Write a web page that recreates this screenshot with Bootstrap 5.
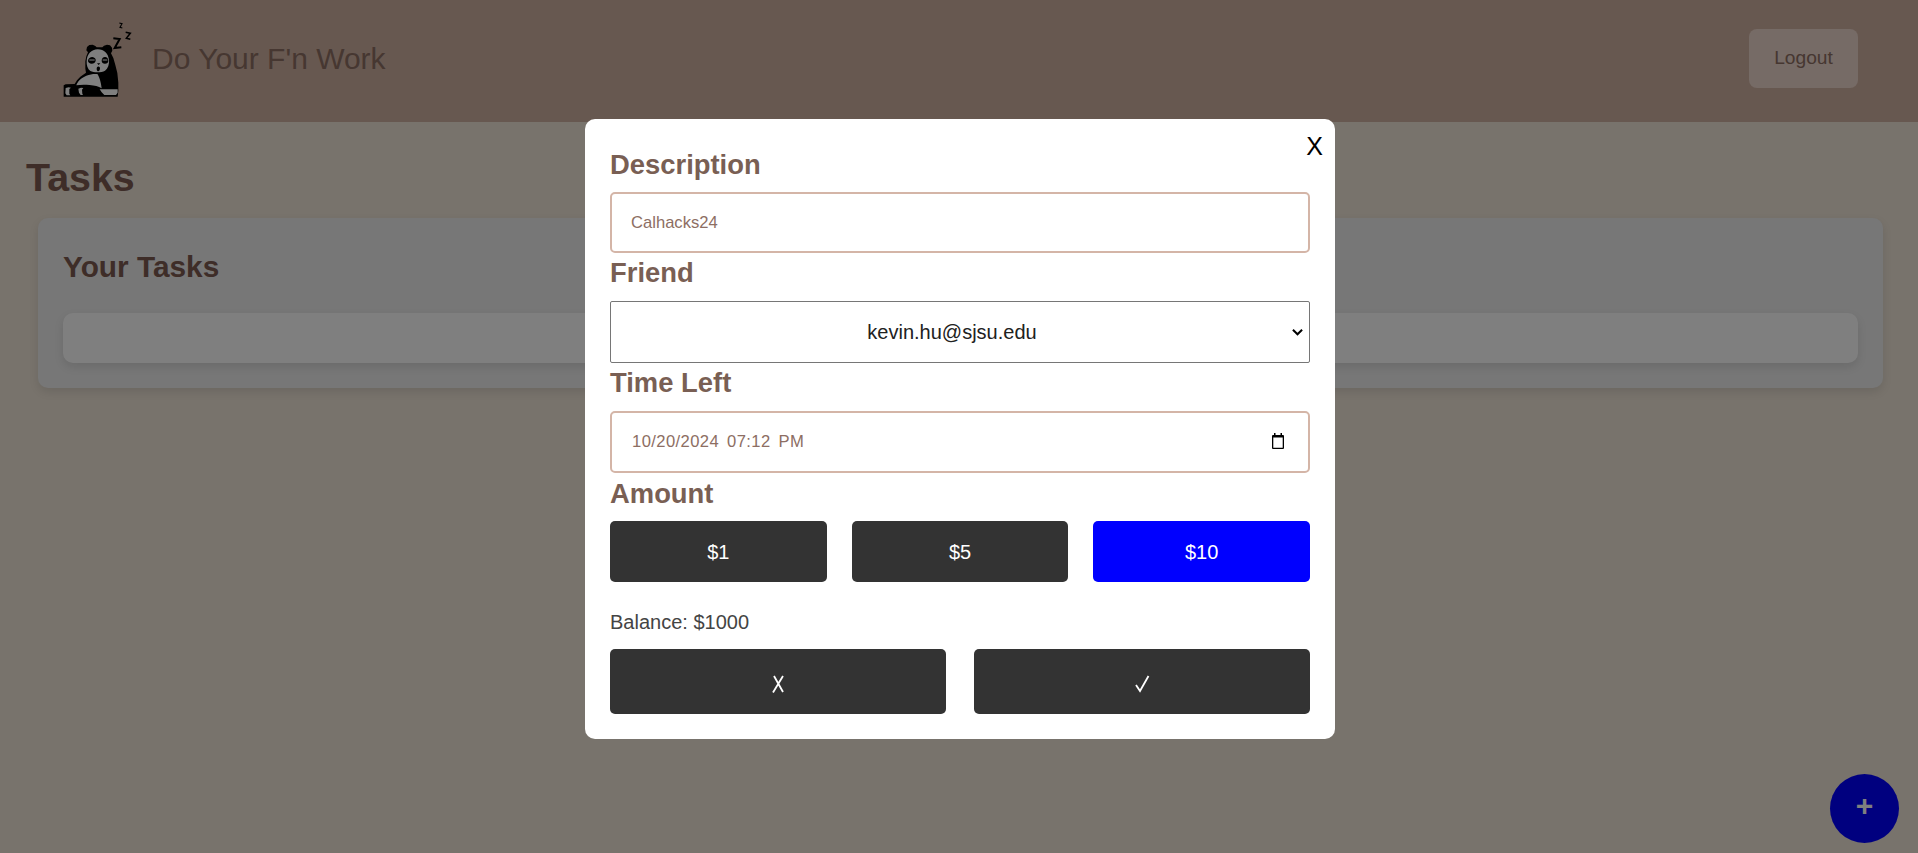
<!DOCTYPE html>
<html lang="en">
<head>
  <meta charset="UTF-8" />
  <title>Do Your F'n Work</title>
  <link href="https://cdn.jsdelivr.net/npm/bootstrap@5.3.3/dist/css/bootstrap.min.css" rel="stylesheet">
  <style>
    body {
      background: #f0e6d8;
      font-family: "Liberation Sans", Arial, sans-serif;
      overflow: hidden;
      height: 853px;
    }
    .top-bar {
      height: 122px;
      background: #cfb1a1;
      padding: 0 60px 5px 62px;
    }
    .logo-img { width: 74px; height: 80px; margin-right: 16px; margin-top: 3px; }
    .app-title { font-size: 30px; color: #8d6e63; margin: 0; }
    .logout-btn {
      width: 109px;
      height: 59px;
      background: #ecd6cc;
      color: #8d6e63;
      font-size: 19.2px;
      border: 0;
      border-radius: 8px;
      padding: 0;
    }
    .page-heading { font-size: 39.4px; font-weight: 700; color: #7d5a50; margin: 0; padding: 32px 0 18px 26px; line-height: 46px; }
    .tasks-box {
      margin: 0 35px 0 38px;
      height: 170px;
      background: #eeeeee;
      border-radius: 10px;
      padding: 32px 25px 0;
      box-shadow: 0 4px 10px rgba(0,0,0,.1);
    }
    .tasks-title { font-size: 29.8px; font-weight: 700; color: #7d5a50; margin: 0 0 29px; line-height: 34px; }
    .task-slot { height: 50px; background: #fff; border-radius: 10px; box-shadow: 0 4px 10px rgba(0,0,0,.1); }
    .fab {
      position: fixed;
      left: 1830px;
      top: 774px;
      width: 69px;
      height: 69px;
      border-radius: 50%;
      border: 0;
      background: #0000ff;
      color: #fff;
      font-size: 30px;
      font-weight: 700;
      line-height: 1;
      padding: 0 0 6px;
    }
    .dim-layer {
      position: fixed;
      inset: 0;
      background: rgba(0,0,0,.5);
      padding: 119px 0 0 2px;
    }
    .task-dialog {
      position: relative;
      width: 750px;
      height: 620px;
      background: #fff;
      border-radius: 10px;
      padding: 25px;
    }
    .close-x {
      position: absolute;
      top: 12px;
      right: 12px;
      font-size: 25px;
      line-height: 30px;
      color: #000;
      background: none;
      border: 0;
      padding: 0;
    }
    .field-label {
      display: block;
      font-size: 27.4px;
      font-weight: 700;
      line-height: 32px;
      color: #795f54;
      margin: 4px 0 12px;
    }
    .field-label.label-low { margin: 5px 0 11px; }
    .text-field.form-control {
      height: 61px;
      border: 2px solid #d4b5a7;
      border-radius: 5px;
      padding: 0 19px;
      font-size: 16.6px;
      color: #8d6e63;
      box-shadow: none;
    }
    .date-wrap { margin-top: 1px; }
    .date-field.form-control { height: 62px; padding-left: 20px; letter-spacing: .4px; word-spacing: 3px; }
    .date-icon { position: absolute; right: 26px; top: 22px; width: 12px; height: 16px; }
    .friend-pick.form-select {
      height: 62px;
      border: 1px solid #767676;
      border-radius: 2px;
      padding: 0 16px 0 0;
      font-size: 20px;
      text-align: center;
      color: #212121;
      background-image: url("data:image/svg+xml,%3csvg xmlns='http://www.w3.org/2000/svg' viewBox='0 0 12 8'%3e%3cpath fill='none' stroke='%23000' stroke-width='2.2' d='M1 1.500l5 5 5-5'/%3e%3c/svg%3e");
      background-position: right 6px center;
      background-size: 11px 8px;
    }
    .dark-btn {
      background: #333;
      color: #fff;
      border: 0;
      border-radius: 5px;
      font-size: 20px;
      padding: 0;
    }
    .dark-btn.picked { background: #0000ff; }
    .mark-icon { width: 15px; height: 18px; margin-top: 1px; }
    .amount-row { height: 61px; gap: 25px; }
    .confirm-row { height: 65px; gap: 28px; }
    .balance-line { font-size: 20px; line-height: 30px; color: #444; margin: 25px 0 12px; }
  </style>
</head>
<body>

<header class="top-bar d-flex align-items-center justify-content-between">
  <div class="d-flex align-items-center">
    <svg class="logo-img" viewBox="65 30 222 240" aria-label="Sleeping panda logo">
      <path fill="#000" d="M70 260V226l6-3 27-1 7-11 10-11 17-12-2-12 0-22 3-15 5-12-5-6 2-10 7-6 10-1 8 4 4 4h17l5-5 9-3 9 2 6 7 1 9-4 8 7 14 6 21 6 24 3 29v24L232 260z"/>
      <path fill="#fff" d="M172 118c20 0 32 13 34 32 1 14-3 26-12 32-10 6-32 7-44 1-8-6-12-18-11-30 1-20 14-35 33-35z"/>
      <path fill="#000" d="M143 152c1-7 7-11 13-11 7 1 11 5 10 11-1 6-6 9-12 9-6-1-11-4-11-9zM184 152c0-6 4-11 10-11 6 0 10 5 10 11 0 5-4 9-10 9-6 0-10-4-10-9z"/>
      <path fill="none" stroke="#fff" stroke-width="3" d="M147 150h16M187 150h14"/>
      <path fill="#000" d="M170 160h10l-5 5zM172 170c3-2 7 0 7 5s-3 9-5 9-5-3-5-7 1-6 3-7z"/>
      <path fill="#fff" d="M108 226c3-11 14-22 30-29 12-5 24-6 33-5 6 8 11 24 13 43-10-6-21-9-36-10-15-1-29-1-40 1zM178 238h54l0 10-5 7-35 0-8-8zM76 234l9-2 7 1-5 4 0 14 3 5h-11l-4-6zM114 236l8-3 7 1-4 5 1 12 2 4h-7l-5-7z"/>
      <path fill="none" stroke="#000" stroke-width="6" d="M219 85l19 2-15 27 20-2"/>
      <path fill="none" stroke="#000" stroke-width="4.500" d="M256 67l14 3-12 15 12 3"/>
      <path fill="none" stroke="#000" stroke-width="3.500" d="M237 39l8 2-6 11 7 2"/>
    </svg>
    <h1 class="app-title fw-normal">Do Your F'n Work</h1>
  </div>
  <button class="logout-btn">Logout</button>
</header>

<main>
  <h2 class="page-heading">Tasks</h2>
  <section class="tasks-box">
    <h3 class="tasks-title">Your Tasks</h3>
    <div class="task-slot"></div>
  </section>
</main>

<button class="fab">+</button>

<div class="dim-layer d-flex justify-content-center align-items-start">
  <form class="task-dialog">
    <button type="button" class="close-x">X</button>

    <label class="field-label label-low" for="desc">Description</label>
    <input id="desc" type="text" class="form-control text-field" value="Calhacks24">

    <label class="field-label" for="friend">Friend</label>
    <select id="friend" class="form-select friend-pick">
      <option>kevin.hu@sjsu.edu</option>
    </select>

    <label class="field-label" for="due">Time Left</label>
    <div class="date-wrap position-relative">
      <input id="due" type="text" class="form-control text-field date-field" value="10/20/2024 07:12 PM">
      <svg class="date-icon" viewBox="0 0 12 16"><path fill="#000" fill-rule="evenodd" d="M2 0h1.500v2h5V0H10v2h1a1 1 0 0 1 1 1v12a1 1 0 0 1-1 1H1a1 1 0 0 1-1-1V3a1 1 0 0 1 1-1h1zM1.300 4.500v10.200h9.400V4.500z"/></svg>
    </div>

    <label class="field-label label-low" for="amount">Amount</label>
    <div id="amount" class="d-flex amount-row">
      <button type="button" class="dark-btn flex-fill w-100">$1</button>
      <button type="button" class="dark-btn flex-fill w-100">$5</button>
      <button type="button" class="dark-btn picked flex-fill w-100">$10</button>
    </div>

    <p class="balance-line">Balance: $1000</p>

    <div class="d-flex confirm-row">
      <button type="button" class="dark-btn flex-fill w-100" aria-label="Cancel">
        <svg class="mark-icon" viewBox="0 0 15 18"><path fill="none" stroke="#fff" stroke-width="1.800" d="M3 1l9 16M12 1L2 17.500"/></svg>
      </button>
      <button type="button" class="dark-btn flex-fill w-100" aria-label="Confirm">
        <svg class="mark-icon" viewBox="0 0 15 18"><path fill="none" stroke="#fff" stroke-width="1.800" d="M1 10l4 6L13.500 1"/></svg>
      </button>
    </div>
  </form>
</div>

</body>
</html>
